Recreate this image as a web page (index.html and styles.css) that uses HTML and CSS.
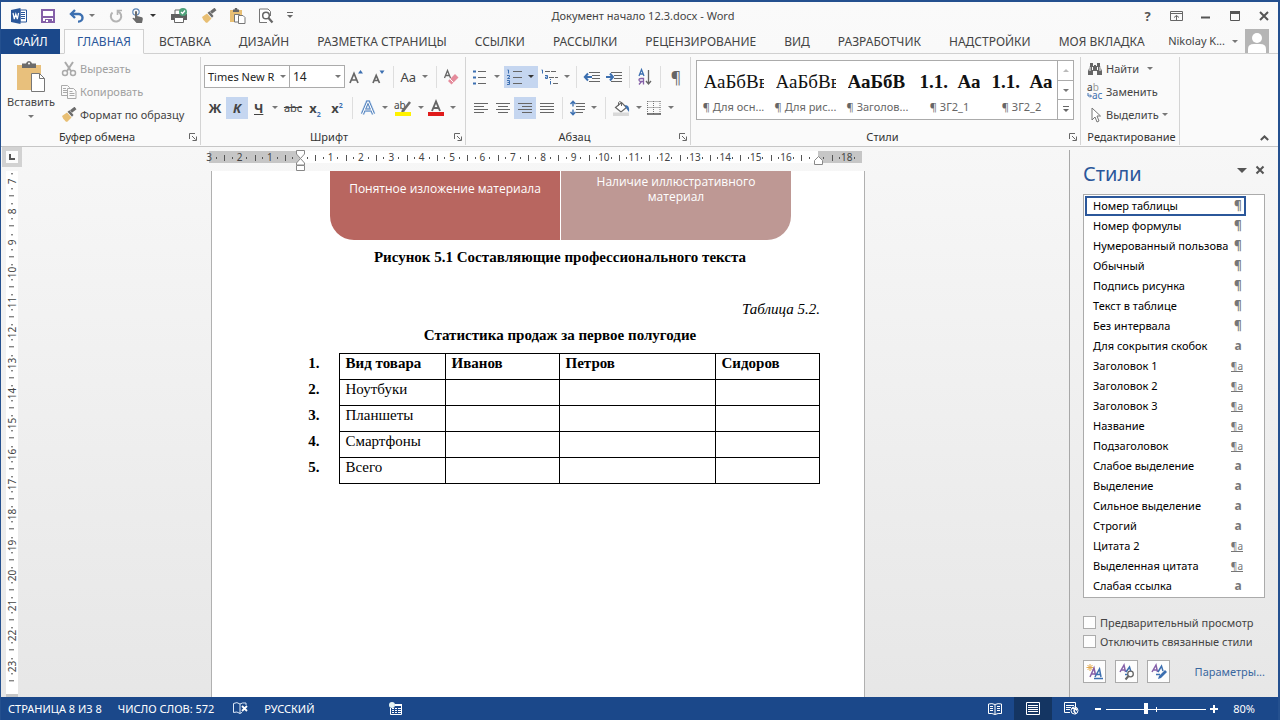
FILE: index.html
```html
<!DOCTYPE html>
<html lang="ru">
<head>
<meta charset="utf-8">
<title>Документ начало 12.3.docx - Word</title>
<link rel="stylesheet" href="styles.css">
</head>
<body>
<svg class="defs" aria-hidden="true">
  <defs>
    <symbol id="brush" viewBox="0 0 16 16">
      <path d="M1 9 L6 5.500 L10.500 10.500 L6 15 Q4 14.500 3.500 13 Q2 12 1 9Z" fill="#e8bf74"/>
      <path d="M6.500 4.800 L8.500 3.300 L12.500 8 L11 9.800Z" fill="#6b6b6b"/>
      <path d="M10 4.500 L14.500 1" stroke="#6b6b6b" stroke-width="3.200"/>
    </symbol>
    <symbol id="launch" viewBox="0 0 8 8">
      <path d="M.5 6V.5H6M3 3l3.500 3.500M7.500 3.500v4h-4" fill="none" stroke="#666"/>
    </symbol>
  </defs>
</svg>
<div class="app">
  <header class="titlebar">
    <div class="quick">
      <svg class="logo" viewBox="0 0 16 16" width="16" height="16"><path d="M9 2h6.500v12H9z" fill="#fff" stroke="#2b579a"/><path d="M10 4.500h4M10 6.500h4M10 8.500h4M10 10.500h4" stroke="#2b579a"/><path d="M0 2 9.500 0v16L0 14z" fill="#2b579a"/><path d="m2 5 1.300 6L4.800 6l1.500 5L7.600 5" fill="none" stroke="#fff" stroke-width="1.200"/></svg>
      <button class="qbtn q-save" aria-label="Сохранить"><svg viewBox="0 0 14 14" width="14" height="14"><path d="M1 1h12v12H1z" fill="#fff" stroke="#8560a8" stroke-width="2"/><path d="M2 7h10v2H2zM4 10h7v3H4z" fill="#8560a8"/><path d="M5 11h2v2H5z" fill="#fff"/></svg></button>
      <button class="qbtn q-undo" aria-label="Отменить"><svg viewBox="0 0 15 14" width="15" height="14"><path d="M2 5h7.500a4 3.800 0 0 1 0 7.600H9" fill="none" stroke="#3c6fb0" stroke-width="2.400"/><path d="M6 1 2 5l4 4" fill="none" stroke="#3c6fb0" stroke-width="2.400"/></svg><i class="caret"></i></button>
      <button class="qbtn q-redo" aria-label="Повторить"><svg viewBox="0 0 14 14" width="14" height="14"><path d="M9 2.500A5.200 5.200 0 1 1 3.500 3.500" fill="none" stroke="#b3b3b3" stroke-width="2"/><path d="M8.500 6V1.500H13" fill="none" stroke="#b3b3b3" stroke-width="1.600"/></svg></button>
      <button class="qbtn q-touch" aria-label="Режим сенсорного управления"><svg viewBox="0 0 14 16" width="14" height="16"><circle cx="5" cy="4" r="3.200" fill="none" stroke="#5f87b8" stroke-width="1.200"/><path d="M4 3.500q1-1 2 0V8l5 1.200q1 .5.800 2L11 15H5.500L1.500 10.500q0-1.500 2.500 0z" fill="#6b6b6b"/></svg><i class="caret dark"></i></button>
      <button class="qbtn q-print" aria-label="Быстрая печать"><svg viewBox="0 0 17 16" width="17" height="16"><path d="M4 6V2h6v4" fill="#fff" stroke="#666"/><path d="M0 6h16v6h-3v-2H3v2H0z" fill="#5f5f5f"/><path d="M3.500 9.500h9v5h-9z" fill="#fff" stroke="#666"/><circle cx="12" cy="4" r="4" fill="#4fa27a"/><path d="m10 4 1.500 1.500L14 2.500" fill="none" stroke="#fff" stroke-width="1.200"/></svg></button>
      <button class="qbtn q-brush" aria-label="Формат по образцу"><svg width="16" height="16"><use href="#brush"/></svg></button>
      <button class="qbtn q-paste" aria-label="Вставить"><svg viewBox="0 0 16 16" width="16" height="16"><path d="M0 2h12v12H0z" fill="#e8bf74"/><path d="M3 1.500h1.500L5 0h2l.5 1.500H9V4H3z" fill="#666"/><path d="M4.500 6.500h5V14h-5z" fill="#fff" stroke="#777"/><path d="M8.500 7.500H13L15 9.500v6H8.500z" fill="#fff" stroke="#777"/></svg></button>
      <button class="qbtn q-preview" aria-label="Предварительный просмотр"><svg viewBox="0 0 15 16" width="15" height="16"><path d="M11.500 8V3.500L9 1H.5v13.500H8" fill="#fff" stroke="#777"/><circle cx="7" cy="7.500" r="3.300" fill="#fff" stroke="#666" stroke-width="1.500"/><path d="m9.500 10 4 4.500" stroke="#666" stroke-width="2.200"/></svg></button>
      <button class="qbtn q-custom" aria-label="Настройка панели"><svg viewBox="0 0 6 7" width="6" height="7"><path d="M0 .5h6" stroke="#666"/><path d="M0 3h6L3 6z" fill="#666"/></svg></button>
    </div>
    <h1 class="doc-title">Документ начало 12.3.docx - Word</h1>
    <div class="window-tools">
      <button class="wbtn help" aria-label="Справка">?</button>
      <button class="wbtn" aria-label="Параметры отображения ленты"><svg viewBox="0 0 13 10" width="13" height="10"><path d="M.5.500h12v9H.5zM.5 2.500h12M6.500 9V4.500M4 6.500l2.500-2 2.500 2" fill="none" stroke="#666"/></svg></button>
      <button class="wbtn" aria-label="Свернуть"><svg viewBox="0 0 10 10" width="10" height="10"><path d="M0 6.500h9" stroke="#555" stroke-width="2"/></svg></button>
      <button class="wbtn" aria-label="Развернуть"><svg viewBox="0 0 10 10" width="10" height="10"><path d="M.5 1h9v8.500h-9z" fill="none" stroke="#555"/><path d="M0 1.500h10" stroke="#555" stroke-width="3"/></svg></button>
      <button class="wbtn" aria-label="Закрыть"><svg viewBox="0 0 10 10" width="10" height="10"><path d="m1 1 8 8M9 1 1 9" stroke="#555" stroke-width="2"/></svg></button>
    </div>
  </header>

  <nav class="tabs">
    <button class="tab file">ФАЙЛ</button>
    <button class="tab active">ГЛАВНАЯ</button>
    <button class="tab">ВСТАВКА</button>
    <button class="tab">ДИЗАЙН</button>
    <button class="tab">РАЗМЕТКА СТРАНИЦЫ</button>
    <button class="tab">ССЫЛКИ</button>
    <button class="tab">РАССЫЛКИ</button>
    <button class="tab">РЕЦЕНЗИРОВАНИЕ</button>
    <button class="tab">ВИД</button>
    <button class="tab">РАЗРАБОТЧИК</button>
    <button class="tab">НАДСТРОЙКИ</button>
    <button class="tab">МОЯ ВКЛАДКА</button>
    <button class="account">Nikolay K... <i class="caret"></i><svg viewBox="0 0 24 24" width="24" height="24"><path d="M0 0h24v24H0z" fill="#b5b5b5"/><circle cx="12" cy="9" r="5" fill="#fff"/><path d="M3 24v-4q0-5 6-5h6q6 0 6 5v4z" fill="#fff"/></svg></button>
  </nav>

  <section class="ribbon">
    <div class="group clipboard">
      <div class="tools">
        <button class="paste"><svg viewBox="0 0 30 31" width="30" height="31"><path d="M1 4h24v25H1z" fill="#e8c07c"/><path d="M6 2.500h4Q10.500 0 13 0t3 2.500h4V7H6z" fill="#6b6b6b"/><circle cx="13" cy="2.500" r="1" fill="#fff"/><path d="M15.500 12.500h8l5 5v13h-13z" fill="#fff" stroke="#777"/><path d="M23.500 12.500v5h5" fill="none" stroke="#777"/></svg><span>Вставить</span><i class="caret"></i></button>
        <div class="stack">
          <button class="cmd off"><svg viewBox="0 0 16 16" width="16" height="16"><path d="M4 1l6 9M12 1 6 10" stroke="#aaa" stroke-width="2"/><circle cx="4" cy="12" r="2.500" fill="none" stroke="#aaa" stroke-width="1.500"/><circle cx="12" cy="12" r="2.500" fill="none" stroke="#aaa" stroke-width="1.500"/></svg>Вырезать</button>
          <button class="cmd off"><svg viewBox="0 0 16 16" width="16" height="16"><path d="M.5 1.500h6l2 2v8h-8zM2 4.500h3M2 6.500h4M2 8.500h4" fill="none" stroke="#aaa"/><path d="M6.500 4.500h6l2.500 2.500v7.500H6.500zM8.500 7.500h3M8.500 9.500h5M8.500 11.500h5" fill="#fafafa" stroke="#aaa"/></svg>Копировать</button>
          <button class="cmd"><svg width="16" height="16"><use href="#brush"/></svg>Формат по образцу</button>
        </div>
      </div>
      <div class="caption"><span>Буфер обмена</span><button class="launcher" aria-label="Буфер обмена: параметры"><svg width="8" height="8"><use href="#launch"/></svg></button></div>
    </div>

    <div class="group font">
      <div class="tools rows">
        <div class="row">
          <button class="combo family"><span>Times New R</span><i class="caret"></i></button>
          <button class="combo size"><span>14</span><i class="caret"></i></button>
          <button class="tool" aria-label="Увеличить размер"><svg viewBox="0 0 16 16" width="16" height="16"><path d="M2 14 6 4.500 10 14M3.500 11h5" fill="none" stroke="#666" stroke-width="1.700"/><path d="M10 4.500h5L12.500 1z" fill="#3c6fb0"/></svg></button>
          <button class="tool" aria-label="Уменьшить размер"><svg viewBox="0 0 16 16" width="16" height="16"><path d="M3 14 6.200 6.500 9.500 14M4.500 11.500h3.500" fill="none" stroke="#666" stroke-width="1.700"/><path d="M9.500 1.500h5L12 5z" fill="#3c6fb0"/></svg></button>
          <i class="sep"></i>
          <button class="split"><span class="aa">Aa</span><i class="caret"></i></button>
          <i class="sep"></i>
          <button class="tool" aria-label="Очистить форматирование"><svg viewBox="0 0 16 16" width="16" height="16"><path d="M1.500 9 4.500 1.500 7.500 9M2.500 6.500h4" fill="none" stroke="#666" stroke-width="1.300"/><path d="m5 12 7-7 3.500 3.500-7 7z" fill="#e58c9c"/><path d="m7 10 3.500 3.500" stroke="#fff"/></svg></button>
        </div>
        <div class="row">
          <button class="tool bold">Ж</button>
          <button class="tool bold italic on">К</button>
          <button class="split"><span class="bold under">Ч</span><i class="caret"></i></button>
          <button class="tool strike">abc</button>
          <button class="tool bold"><span>x<sub>2</sub></span></button>
          <button class="tool bold"><span>x<sup>2</sup></span></button>
          <i class="sep"></i>
          <button class="split" aria-label="Текстовые эффекты"><svg viewBox="0 0 16 16" width="16" height="16"><path d="M2.500 14 7.500 2h1l5 12M4.500 10h7" fill="none" stroke="#a9c6e8" stroke-width="4"/><path d="M2.500 14 7.500 2h1l5 12M4.500 10h7" fill="none" stroke="#3c6fb0" stroke-width="2.600"/><path d="M2.500 14 7.500 2h1l5 12M4.500 10h7" fill="none" stroke="#fff" stroke-width="1.200"/></svg><i class="caret"></i></button>
          <button class="split marker"><svg viewBox="0 0 18 16" width="18" height="16"><text x="0" y="9" class="ab">ab</text><path d="m9 11 7-9" stroke="#6b6b6b" stroke-width="2.500"/><path d="m7 13 1-4 3 2z" fill="#6b6b6b"/><path d="M1 12h16v4H1z" fill="#fff200"/></svg><i class="caret"></i></button>
          <button class="split" aria-label="Цвет текста"><svg viewBox="0 0 16 16" width="16" height="16"><path d="M4 11 8 1.500 12 11M5.500 8h5" fill="none" stroke="#666" stroke-width="1.900"/><path d="M0 12h16v4H0z" fill="#e01b1b"/></svg><i class="caret"></i></button>
        </div>
      </div>
      <div class="caption"><span>Шрифт</span><button class="launcher" aria-label="Шрифт: параметры"><svg width="8" height="8"><use href="#launch"/></svg></button></div>
    </div>

    <div class="group para">
      <div class="tools rows">
        <div class="row">
          <button class="split" aria-label="Маркеры"><svg viewBox="0 0 14 16" width="14" height="16"><path d="M5 2.500h8M5 8.500h8M5 14.500h8" stroke="#666"/><path d="M0 1.500h3v2H0zM0 7.500h3v2H0zM0 13.500h3v2H0z" fill="#3c6fb0"/></svg><i class="caret"></i></button>
          <button class="split on" aria-label="Нумерация"><svg viewBox="0 0 15 16" width="15" height="16"><path d="M6 2.500h9M6 8.500h9M6 14.500h9" stroke="#666"/><path d="M.5 1h1v3.500M0 6.500h2.500v1.500L.5 9.500h2.500M0 11.500h2.500v4H0M.5 13.500h2" fill="none" stroke="#3c6fb0"/></svg><i class="caret dark"></i></button>
          <button class="split" aria-label="Многоуровневый список"><svg viewBox="0 0 17 16" width="17" height="16"><path d="M4 2.500h12M8 8.500h9M12 14.500h5" stroke="#666" stroke-dasharray="5 1"/><path d="M.5 1h1v3.500M4 6.500h2.500v3H4.500v-1.500h2M9.500 12v3.500M9.500 10v1" fill="none" stroke="#3c6fb0"/></svg><i class="caret"></i></button>
          <i class="sep"></i>
          <button class="tool" aria-label="Уменьшить отступ"><svg viewBox="0 0 16 16" width="16" height="16"><path d="M5 3.500h11M8 6.500h8M8 9.500h8M5 12.500h11" stroke="#666"/><path d="M1 8h7M4 4.500.800 8 4 11.500" fill="none" stroke="#3c6fb0" stroke-width="2"/></svg></button>
          <button class="tool" aria-label="Увеличить отступ"><svg viewBox="0 0 16 16" width="16" height="16"><path d="M5 3.500h11M8 6.500h8M8 9.500h8M5 12.500h11" stroke="#666"/><path d="M0 8h7M4 4.500 7 8l-3 3.500" fill="none" stroke="#3c6fb0" stroke-width="2"/></svg></button>
          <i class="sep"></i>
          <button class="tool" aria-label="Сортировка"><svg viewBox="0 0 14 16" width="14" height="16"><path d="M1 7 3.500.500 6 7M2 5h3" fill="none" stroke="#3c6fb0" stroke-width="1.300"/><path d="M5.500 15.500v-6H3q-2 0-2 1.500T3 12.500h2.500M3.500 12.500 1 15.500" fill="none" stroke="#8560a8" stroke-width="1.300"/><path d="M10.500 1v14M8 12l2.500 3 2.500-3" fill="none" stroke="#666" stroke-width="1.300"/></svg></button>
          <i class="sep"></i>
          <button class="tool pilcrow">¶</button>
        </div>
        <div class="row">
          <button class="tool" aria-label="По левому краю"><svg viewBox="0 0 14 12" width="14" height="12"><path d="M0 1.500h14M0 4.500h10M0 7.500h14M0 10.500h10" stroke="#666"/></svg></button>
          <button class="tool" aria-label="По центру"><svg viewBox="0 0 14 12" width="14" height="12"><path d="M0 1.500h14M2 4.500h10M0 7.500h14M2 10.500h10" stroke="#666"/></svg></button>
          <button class="tool on" aria-label="По правому краю"><svg viewBox="0 0 14 12" width="14" height="12"><path d="M0 1.500h14M4 4.500h10M0 7.500h14M4 10.500h10" stroke="#666"/></svg></button>
          <button class="tool" aria-label="По ширине"><svg viewBox="0 0 14 12" width="14" height="12"><path d="M0 1.500h14M0 4.500h14M0 7.500h14M0 10.500h14" stroke="#666"/></svg></button>
          <i class="sep"></i>
          <button class="split" aria-label="Интервал"><svg viewBox="0 0 15 16" width="15" height="16"><path d="M6 3.500h9M6 6.500h9M6 9.500h9M6 12.500h7" stroke="#666"/><path d="M3 1v5.500M.5 4 3 1.200 5.500 4M3 15V9.500M.5 12 3 14.800 5.500 12" fill="none" stroke="#3c6fb0" stroke-width="1.400"/></svg><i class="caret"></i></button>
          <i class="sep"></i>
          <button class="split" aria-label="Заливка"><svg viewBox="0 0 17 16" width="17" height="16"><path d="m2.500 7.500 6-5 5 5-5.500 4.500z" fill="#fff" stroke="#666" stroke-width="1.200"/><path d="M5.500 6V2.500q1-2 3 0V6" fill="none" stroke="#666"/><path d="M12 5q5 0 4 7l-3-4z" fill="#3c6fb0"/><path d="M0 12.500h16V16H0z" fill="#d9d9d9"/></svg><i class="caret"></i></button>
          <button class="split" aria-label="Границы"><svg viewBox="0 0 14 14" width="14" height="14"><path d="M.5.500h13M.5 6.500h13M.5 0v13M6.500 0v13M13 0v13" fill="none" stroke="#777" stroke-dasharray="1 1"/><path d="M0 13h14" stroke="#555" stroke-width="1.500"/></svg><i class="caret"></i></button>
        </div>
      </div>
      <div class="caption"><span>Абзац</span><button class="launcher" aria-label="Абзац: параметры"><svg width="8" height="8"><use href="#launch"/></svg></button></div>
    </div>

    <div class="group styles">
      <div class="tools">
        <div class="gallery">
          <button class="style"><span class="sample">АаБбВв</span><span class="sname">¶ Для осн...</span></button>
          <button class="style"><span class="sample">АаБбВв</span><span class="sname">¶ Для рис...</span></button>
          <button class="style"><span class="sample bold">АаБбВ</span><span class="sname">¶ Заголов...</span></button>
          <button class="style"><span class="sample bold">1.1.&nbsp; Аа</span><span class="sname">¶ ЗГ2_1</span></button>
          <button class="style"><span class="sample bold">1.1.&nbsp; Аа</span><span class="sname">¶ ЗГ2_2</span></button>
          <div class="scroller">
            <button aria-label="Вверх"><i class="caret up"></i></button>
            <button aria-label="Вниз"><i class="caret"></i></button>
            <button aria-label="Ещё"><svg viewBox="0 0 6 7" width="6" height="7"><path d="M0 .5h6" stroke="#666"/><path d="M0 3h6L3 6z" fill="#666"/></svg></button>
          </div>
        </div>
      </div>
      <div class="caption"><span>Стили</span><button class="launcher" aria-label="Стили: параметры"><svg width="8" height="8"><use href="#launch"/></svg></button></div>
    </div>

    <div class="group editing">
      <div class="tools">
        <div class="stack">
          <button class="cmd"><svg viewBox="0 0 16 16" width="16" height="16"><path d="M3 2h3v3h1V4h2v1h1V2h3v3l2 5v4H10v-4H6v4H1v-4l2-5z" fill="#666"/><path d="M3 6v4M5.500 6v3M10.500 6v3M13 6v4" stroke="#fff"/></svg>Найти <i class="caret find"></i></button>
          <button class="cmd"><svg viewBox="0 0 16 16" width="16" height="16"><text x="0" y="7" class="rep">a<tspan fill="#999">b</tspan></text><text x="5" y="15" class="rep blue">ac</text><path d="M1 9v3h3M3 10.500 4.500 12 3 13.500" fill="none" stroke="#3c6fb0"/></svg>Заменить</button>
          <button class="cmd"><svg viewBox="0 0 16 16" width="16" height="16"><path d="M5 1v12l3-3 2 5 2-1-2-5h3.500z" fill="#fff" stroke="#777"/></svg>Выделить<i class="caret"></i></button>
        </div>
      </div>
      <div class="caption"><span>Редактирование</span></div>
    </div>
    <button class="collapse" aria-label="Свернуть ленту"><svg viewBox="0 0 9 6" width="9" height="6"><path d="m.8 5 3.700-3.500L8.200 5" fill="none" stroke="#555" stroke-width="2"/></svg></button>
  </section>

  <div class="body">
    <main class="editor">
      <button class="tabstop" aria-label="Тип табуляции"><svg viewBox="0 0 6 6" width="6" height="6"><path d="M1 0v5h5" fill="none" stroke="#555" stroke-width="2"/></svg></button>
      <div class="hruler">
        <div class="hscale">
          <i>3</i><i>2</i><i>1</i><i></i><i>1</i><i>2</i><i>3</i><i>4</i><i>5</i><i>6</i><i>7</i><i>8</i><i>9</i><i>10</i><i>11</i><i>12</i><i>13</i><i>14</i><i>15</i><i>16</i><i></i><i>18</i>
          <svg class="indent-left" viewBox="0 0 9 21" width="9" height="21"><path d="M.5.500h8V4l-4 4.500L.5 4zM.5 15v-2l4-4.500 4 4.500v2zM.5 15.500h8v5h-8z" fill="#fff" stroke="#888"/></svg>
          <svg class="indent-right" viewBox="0 0 9 9" width="9" height="9"><path d="M.5 8.500V4.500l4-4 4 4v4z" fill="#fff" stroke="#888"/></svg>
        </div>
      </div>
      <div class="vruler"><div class="vscale"><i>7</i><i>8</i><i>9</i><i>10</i><i>11</i><i>12</i><i>13</i><i>14</i><i>15</i><i>16</i><i>17</i><i>18</i><i>19</i><i>20</i><i>21</i><i>22</i><i>23</i></div></div>
      <div class="canvas">
        <article class="page">
          <div class="diagram">
            <div class="block strong">Понятное изложение материала</div>
            <div class="block pale">Наличие иллюстративного материал</div>
          </div>
          <p class="figure">Рисунок 5.1 Составляющие профессионального текста</p>
          <p class="table-no">Таблица 5.2.</p>
          <p class="table-name">Статистика продаж за первое полугодие</p>
          <table class="sales">
            <colgroup><col class="c0"><col class="c1"><col class="c2"><col class="c3"><col class="c4"></colgroup>
            <tr><td class="num">1.</td><th>Вид товара</th><th>Иванов</th><th>Петров</th><th>Сидоров</th></tr>
            <tr><td class="num">2.</td><td>Ноутбуки</td><td></td><td></td><td></td></tr>
            <tr><td class="num">3.</td><td>Планшеты</td><td></td><td></td><td></td></tr>
            <tr><td class="num">4.</td><td>Смартфоны</td><td></td><td></td><td></td></tr>
            <tr><td class="num">5.</td><td>Всего</td><td></td><td></td><td></td></tr>
          </table>
        </article>
      </div>
    </main>

    <aside class="pane">
      <div class="pane-head">
        <h2>Стили</h2>
        <button aria-label="Меню области"><i class="caret big"></i></button>
        <button aria-label="Закрыть область"><svg viewBox="0 0 10 10" width="10" height="10"><path d="m1.500 1.500 7 7M8.500 1.500l-7 7" stroke="#555" stroke-width="2"/></svg></button>
      </div>
      <ul class="list">
        <li class="sel"><span>Номер таблицы</span><b>¶</b></li>
        <li><span>Номер формулы</span><b>¶</b></li>
        <li><span>Нумерованный пользова</span><b>¶</b></li>
        <li><span>Обычный</span><b>¶</b></li>
        <li><span>Подпись рисунка</span><b>¶</b></li>
        <li><span>Текст в таблице</span><b>¶</b></li>
        <li><span>Без интервала</span><b>¶</b></li>
        <li><span>Для сокрытия скобок</span><b>a</b></li>
        <li><span>Заголовок 1</span><b class="both">¶a</b></li>
        <li><span>Заголовок 2</span><b class="both">¶a</b></li>
        <li><span>Заголовок 3</span><b class="both">¶a</b></li>
        <li><span>Название</span><b class="both">¶a</b></li>
        <li><span>Подзаголовок</span><b class="both">¶a</b></li>
        <li><span>Слабое выделение</span><b>a</b></li>
        <li><span>Выделение</span><b>a</b></li>
        <li><span>Сильное выделение</span><b>a</b></li>
        <li><span>Строгий</span><b>a</b></li>
        <li><span>Цитата 2</span><b class="both">¶a</b></li>
        <li><span>Выделенная цитата</span><b class="both">¶a</b></li>
        <li><span>Слабая ссылка</span><b>a</b></li>
      </ul>
      <div class="checks">
        <label><input type="checkbox">Предварительный просмотр</label>
        <label><input type="checkbox">Отключить связанные стили</label>
      </div>
      <div class="pane-foot">
        <button class="sq" aria-label="Создать стиль"><svg viewBox="0 0 18 18" width="18" height="18"><path d="M4 1v7M.5 4.500h7M1.500 2l5 5M6.500 2l-5 5" stroke="#e3a94f"/><path d="m4 14 4-9 1.500 7M5.500 11h4" fill="none" stroke="#8560a8" stroke-width="1.500"/><path d="m9 14 4.500-8 1.500 8M11 11.500h4M8 15.500h9" fill="none" stroke="#3c6fb0" stroke-width="1.500"/></svg></button>
        <button class="sq" aria-label="Инспектор стилей"><svg viewBox="0 0 18 18" width="18" height="18"><path d="m2 9 4-7 1.500 7M3.500 7h4" fill="none" stroke="#8560a8" stroke-width="1.500"/><path d="m8 9 3.500-5 1.500 5M7 11.500h3" fill="none" stroke="#3c6fb0" stroke-width="1.500"/><circle cx="12.500" cy="11" r="2.800" fill="#fff" stroke="#666" stroke-width="1.300"/><path d="m10.500 13-3 3.500" stroke="#666" stroke-width="2"/></svg></button>
        <button class="sq" aria-label="Управление стилями"><svg viewBox="0 0 18 18" width="18" height="18"><path d="m2 9 4-7 1.500 7M3.500 7h4" fill="none" stroke="#8560a8" stroke-width="1.500"/><path d="m8 9 3.500-6 1.500 5M6 11.500h4" fill="none" stroke="#3c6fb0" stroke-width="1.500"/><path d="m8 16 1-3 6-6 2 2-6 6z" fill="#3c6fb0"/></svg></button>
        <a href="#">Параметры...</a>
      </div>
    </aside>
  </div>

  <footer class="status">
    <span class="s-page">СТРАНИЦА 8 ИЗ 8</span>
    <span class="s-words">ЧИСЛО СЛОВ: 572</span>
    <svg class="s-proof" viewBox="0 0 15 13" width="15" height="13"><path d="M7 2v9.500M7 2Q4-.5.500 1.500v9Q4 9 7 11.500 8 10.500 9 10.500M7 2q2-1.500 6-1V3" fill="none" stroke="#dce8f8"/><path d="m9 4 5 5M14 4 9 9" stroke="#fff" stroke-width="1.800"/></svg>
    <span>РУССКИЙ</span>
    <svg class="s-macro" viewBox="0 0 14 13" width="14" height="13"><path d="M1.500 6v6.500h11v-10H7" fill="none" stroke="#fff"/><path d="M6 2h7v2H6zM3 6h2v1H3zM6 6h2v1H6zM9 6h3v1H9zM3 8h2v1H3zM6 8h2v1H6zM9 8h3v1H9zM3 10h2v1H3zM6 10h2v1H6zM9 10h3v1H9z" fill="#fff"/><circle cx="3" cy="3" r="3" fill="#e6f4f4"/></svg>
    <div class="views">
      <button class="view" aria-label="Режим чтения"><svg viewBox="0 0 14 12" width="14" height="12"><path d="M7 2v9.500M7 1.500Q4 0 .5 1v9.500q3.500-.5 6.500 1 3-1.500 6.500-1V1Q10 0 7 1.500M2 3.500h3M2 5.500h3M2 7.500h3M9 3.500h3M9 5.500h3M9 7.500h3" fill="none" stroke="#fff"/></svg></button>
      <button class="view current" aria-label="Разметка страницы"><svg viewBox="0 0 14 13" width="14" height="13"><path d="M.5.500h13v12H.5zM2 3.500h10M2 5.500h10M2 7.500h10M2 9.500h10" fill="none" stroke="#fff"/></svg></button>
      <button class="view" aria-label="Веб-документ"><svg viewBox="0 0 15 13" width="15" height="13"><path d="M6 10.500H.5v-10h11V5M2 3.500h8M2 5.500h5M2 7.500h4" fill="none" stroke="#fff"/><circle cx="10.500" cy="8.500" r="3.500" fill="#1b488a" stroke="#fff"/><path d="m8 6 3 1-1 2 2 3M11 5.500l2 3" fill="none" stroke="#fff" stroke-width="1.500"/></svg></button>
    </div>
    <div class="zoom">
      <button aria-label="Уменьшить"><svg viewBox="0 0 8 8" width="8" height="8"><path d="M1 4h6" stroke="#fff" stroke-width="2"/></svg></button>
      <input type="range" min="0" max="100" value="39" aria-label="Масштаб">
      <button aria-label="Увеличить"><svg viewBox="0 0 8 8" width="8" height="8"><path d="M0 4h8M4 0v8" stroke="#fff" stroke-width="2"/></svg></button>
      <span>80%</span>
    </div>
  </footer>
</div>
</body>
</html>
```
FILE: styles.css
```css
* { box-sizing: border-box; }
body { margin: 0; font: 12px/16px "Noto Sans", "Open Sans", sans-serif; color: #444; }
button { margin: 0; padding: 0; border: 0; background: none; font: inherit; color: inherit; display: flex; align-items: center; justify-content: center; white-space: nowrap; flex: none; }
svg { display: block; flex: none; overflow: visible; }
.defs { position: absolute; width: 0; height: 0; }
.app { height: 100vh; min-width: 1280px; display: flex; flex-direction: column; overflow: hidden; background: linear-gradient(#fafafa, #f7f7f7 20%, #e6e6e6); border: solid #24508f; border-width: 2px 2px 0 1px; }
.bold { font-weight: 700; }
.caret { width: 0; height: 0; border: 3px solid transparent; border-top-color: #777; border-bottom: 0; flex: none; }
.caret.dark { border-top-color: #333; }
.caret.up { border: 3px solid transparent; border-bottom-color: #bbb; border-top: 0; }
.caret.big { border-width: 5px 5px 0; border-top-color: #555; }

.titlebar { height: 27px; flex: none; display: grid; grid-template-columns: 1fr auto 1fr; align-items: center; padding: 0 3px 0 10px; }
.quick { display: flex; align-items: center; }
.qbtn { justify-content: flex-start; gap: 5px; height: 22px; }
.q-save { margin-left: 14px; }
.q-undo { margin-left: 14px; }
.q-redo { margin-left: 14px; }
.q-touch { margin-left: 8px; }
.q-print { margin-left: 15px; }
.q-brush, .q-paste, .q-preview { margin-left: 13px; }
.q-custom { margin-left: 13px; }
.doc-title { margin: 0; font-size: 11px; font-weight: 400; color: #444; }
.window-tools { display: flex; justify-content: flex-end; }
.wbtn { width: 29px; height: 22px; }
.wbtn:last-child { width: 22px; margin-left: 4px; }
.help { font-size: 13px; font-weight: 700; color: #555; }

.tabs { height: 25px; flex: none; display: flex; border-bottom: 1px solid #d0d0d0; }
.tab { padding: 0 14px; height: 25px; border: solid transparent; border-width: 1px 0 0; }
.tab.file { width: 59px; padding: 0; margin-right: 4px; background: #1b488a; color: #fff; }
.tab.active { padding: 0 12px; margin-right: 1px; border: 1px solid #d0d0d0; border-bottom-color: #fcfcfc; background: #fcfcfc; color: #2b579a; }
.account { margin-left: auto; margin-right: 9px; gap: 7px; font-size: 11px; }

.ribbon { height: 93px; flex: none; display: flex; padding-top: 3px; background: #fafafa; border-bottom: 1px solid #c6c6c6; font-size: 11px; }
.group { flex: none; height: 88px; display: flex; flex-direction: column; justify-content: space-between; border-right: 1px solid #d4d4d4; padding: 0 3px 0 4px; }
.clipboard { width: 200px; }
.font { width: 265px; padding-left: 3px; }
.para { width: 225px; }
.styles { width: 390px; padding-left: 5px; }
.editing { width: 99px; padding-left: 6px; }
.caption { display: flex; align-items: center; height: 16px; color: #333; }
.caption span { flex: 1; text-align: center; white-space: nowrap; }
.launcher { width: 8px; height: 8px; }
.tools { display: flex; }
.rows { flex-direction: column; gap: 8px; padding-top: 8px; }
.row { display: flex; height: 23px; align-items: center; }
.tool { width: 22px; height: 22px; font-size: 13px; }
.split { width: 34px; height: 22px; gap: 6px; padding-left: 3px; justify-content: flex-start; font-size: 13px; }
.split .caret { margin-left: auto; margin-right: 4px; }
.on { background: #c5d6f0; }
.italic { font-style: italic; }
.under { text-decoration: underline; padding-left: 3px; }
.strike { font-size: 11px; text-decoration: line-through; }
.pilcrow { font-size: 16px; color: #666; }
.tool sub, .tool sup { font-size: 7px; line-height: 1px; color: #3c6fb0; }
.ab, .rep { font: 10px "Noto Sans", sans-serif; fill: #444; }
.blue { fill: #3c6fb0; }
.sep { width: 1px; height: 22px; margin: 0 4px; background: #dedede; }
.combo { height: 23px; justify-content: space-between; padding: 0 3px 0 3px; border: 1px solid #ababab; background: #fff; color: #222; }
.combo + .combo { margin-left: -1px; }
.family { width: 86px; }
.size { width: 56px; font-size: 12px; }
.stack { display: flex; flex-direction: column; }
.cmd { height: 23px; gap: 3px; justify-content: flex-start; }
.find { margin-left: 5px; }
.off { color: #a0a0a0; }
.paste { flex-direction: column; justify-content: flex-start; width: 52px; padding-top: 4px; margin-right: 4px; }
.paste span { margin: 2px 0 5px; }
.gallery { display: flex; margin-top: 3px; height: 60px; width: 378px; border: 1px solid #ababab; background: #fff; }
.style { width: 72px; flex-direction: column; justify-content: flex-start; padding: 9px 5px 0 6px; }
.sample { width: 60px; overflow: hidden; text-align: left; font: 19px/24px "Liberation Serif", serif; color: #111; }
.sample.bold { font-weight: 700; }
.sname { margin-top: 5px; font-size: 11px; color: #666; }
.scroller { margin-left: auto; width: 16px; display: flex; flex-direction: column; border-left: 1px solid #ababab; }
.scroller button { flex: 1; width: 15px; }
.scroller button + button { border-top: 1px solid #ababab; }
.collapse { margin: auto 9px 1px auto; width: 9px; height: 14px; }

.body { flex: 1; min-height: 0; display: flex; }
.editor { flex: 1; min-width: 0; display: grid; grid-template: 24px 1fr / 20px 1fr; }
.tabstop { width: 20px; height: 20px; margin-left: 1px; border: 4px solid #d2d2d2; background: #fcfcfc; }
.hruler { display: flex; justify-content: center; padding: 4px 14px 0 0; }
.hscale { position: relative; display: flex; width: 654px; height: 20px; padding-right: 3px; flex: none; }
.hscale i { flex: 1; height: 12px; text-align: center; font: 10px/13px "Noto Sans", sans-serif; color: #444;
  background-image: linear-gradient(#555, #555), linear-gradient(#555, #555), linear-gradient(#555, #555), linear-gradient(#fff, #fff);
  background-size: 1px 6px, 1px 2px, 1px 2px, 100% 100%; background-position: 0 4px, 25% 6px, 75% 6px, 0 0; background-repeat: no-repeat; }
.hscale i:nth-child(-n+3), .hscale i:nth-child(22) { background-color: #c6c6c6; background-size: 1px 6px, 1px 2px, 1px 2px, 0 0; }
.hscale i:nth-child(1) { margin-left: -17px; background: linear-gradient(#555, #555) 75% 6px / 1px 2px no-repeat, linear-gradient(90deg, transparent 50%, #c6c6c6 50%); }
.hscale i:nth-child(4) { background-image: linear-gradient(#555, #555), linear-gradient(#555, #555), linear-gradient(#555, #555), linear-gradient(90deg, #c6c6c6 50%, #fff 50%); }
.hscale i:nth-child(21) { background-image: linear-gradient(#555, #555), linear-gradient(#555, #555), linear-gradient(#555, #555), linear-gradient(90deg, #fff 55%, #c6c6c6 55%); }
.indent-left { position: absolute; left: 85px; top: -1px; }
.indent-right { position: absolute; left: 603px; top: 5px; }
.vruler { margin-left: 5px; width: 12px; background: #fff; overflow: hidden; border-bottom: 3px solid #c6c6c6; }
.vscale { display: flex; flex-direction: column; height: 515px; margin-top: -5px; }
.vscale i { flex: 1; writing-mode: vertical-rl; transform: rotate(180deg); text-align: center; font: 10px/12px "Noto Sans", sans-serif; color: #444;
  background-image: linear-gradient(#555, #555), linear-gradient(#555, #555), linear-gradient(#555, #555);
  background-size: 5px 1px, 2px 1px, 2px 1px; background-position: 4px 0, 5px 25%, 5px 75%; background-repeat: no-repeat; }
.canvas { display: flex; justify-content: center; padding-right: 14px; overflow: hidden; }
.page { width: 654px; flex: none; padding: 0 44px 0 88px; background: #fff; border: solid #b0b0b0; border-width: 0 1px; font: 15px/18px "Liberation Serif", serif; color: #000; }
.page p { margin: 0; text-align: center; }
.diagram { display: grid; grid-template-columns: 1fr 1fr; height: 69px; margin: 0 29px 0 30px; gap: 1px; font: 12px/15px "Open Sans", sans-serif; color: #fff; text-align: center; }
.block { padding: 3px 30px 0; }
.strong { background: #b86660; border-radius: 0 0 0 24px; padding: 10px 0 0; }
.pale { background: #be9894; border-radius: 0 0 24px 0; }
.page .figure { padding-top: 8px; font-weight: 700; }
.page .table-no { padding-top: 34px; text-align: right; font-style: italic; }
.page .table-name { padding: 8px 0 9px; font-weight: 700; }
.sales { width: 520px; table-layout: fixed; border-collapse: collapse; }
.sales td, .sales th { height: 26px; padding: 0 6px; text-align: left; vertical-align: top; border: 1px solid #000; line-height: 18px; }
.sales .num { border-width: 0 1px 0 0; padding-right: 19px; text-align: right; font-weight: 700; }
.c0 { width: 39px; }
.c1 { width: 106px; }
.c2 { width: 114px; }
.c3 { width: 156px; }

.pane { width: 209px; flex: none; margin-top: 3px; padding: 10px 13px 0 13px; border-left: 1px solid #a8a8a8; }
.pane-head { display: flex; align-items: flex-start; gap: 8px; height: 34px; }
.pane-head h2 { flex: 1; margin: 0; font-size: 20px; line-height: 28px; font-weight: 400; color: #2b579a; }
.pane-head button { height: 20px; }
.list { margin: 0; padding: 1px 18px 1px 1px; list-style: none; background: #fff; border: 1px solid #ababab; color: #000; font-size: 11px; }
.list li { display: flex; align-items: center; height: 20px; padding: 0 3px 0 8px; white-space: nowrap; }
.list span { flex: 1; }
.list b { min-width: 10px; text-align: center; font-weight: 700; font-size: 12px; color: #777; }
.list .both { font-size: 10px; line-height: 10px; border-bottom: 1px solid #777; font-weight: 400; }
.list .sel { border: 2px solid #2b579a; padding: 0 1px 0 6px; }
.checks { padding-top: 15px; font-size: 11px; }
.checks label { display: flex; align-items: center; gap: 4px; height: 19px; white-space: nowrap; }
.checks input { appearance: none; margin: 0; width: 13px; height: 13px; border: 1px solid #ababab; background: #fdfdfd; }
.pane-foot { display: flex; align-items: center; gap: 9px; padding-top: 9px; font-size: 11px; }
.sq { width: 23px; height: 23px; border: 1px solid #ababab; background: #fdfdfd; }
.pane-foot a { margin-left: auto; color: #3a679f; text-decoration: none; }

.status { height: 23px; flex: none; display: flex; align-items: center; margin: 0 -2px 0 -1px; padding: 0 25px 0 8px; background: #1b488a; color: #fff; font-size: 11px; }
.s-words { margin-left: 16px; }
.s-proof { margin: 0 16px 0 19px; }
.s-macro { margin-left: 74px; }
.views { display: flex; margin-left: auto; }
.view { width: 38px; height: 23px; }
.view.current { background: #143562; }
.zoom { display: flex; align-items: center; margin-left: 4px; }
.zoom input { appearance: none; width: 100px; height: 12px; margin: 0 4px; background: linear-gradient(#fff, #fff) 0 6px / 100% 1px no-repeat, linear-gradient(#fff, #fff) 50px 4px / 1px 5px no-repeat; }
.zoom input::-webkit-slider-thumb { appearance: none; width: 4px; height: 11px; background: #fff; }
.zoom span { margin-left: 15px; }
```
